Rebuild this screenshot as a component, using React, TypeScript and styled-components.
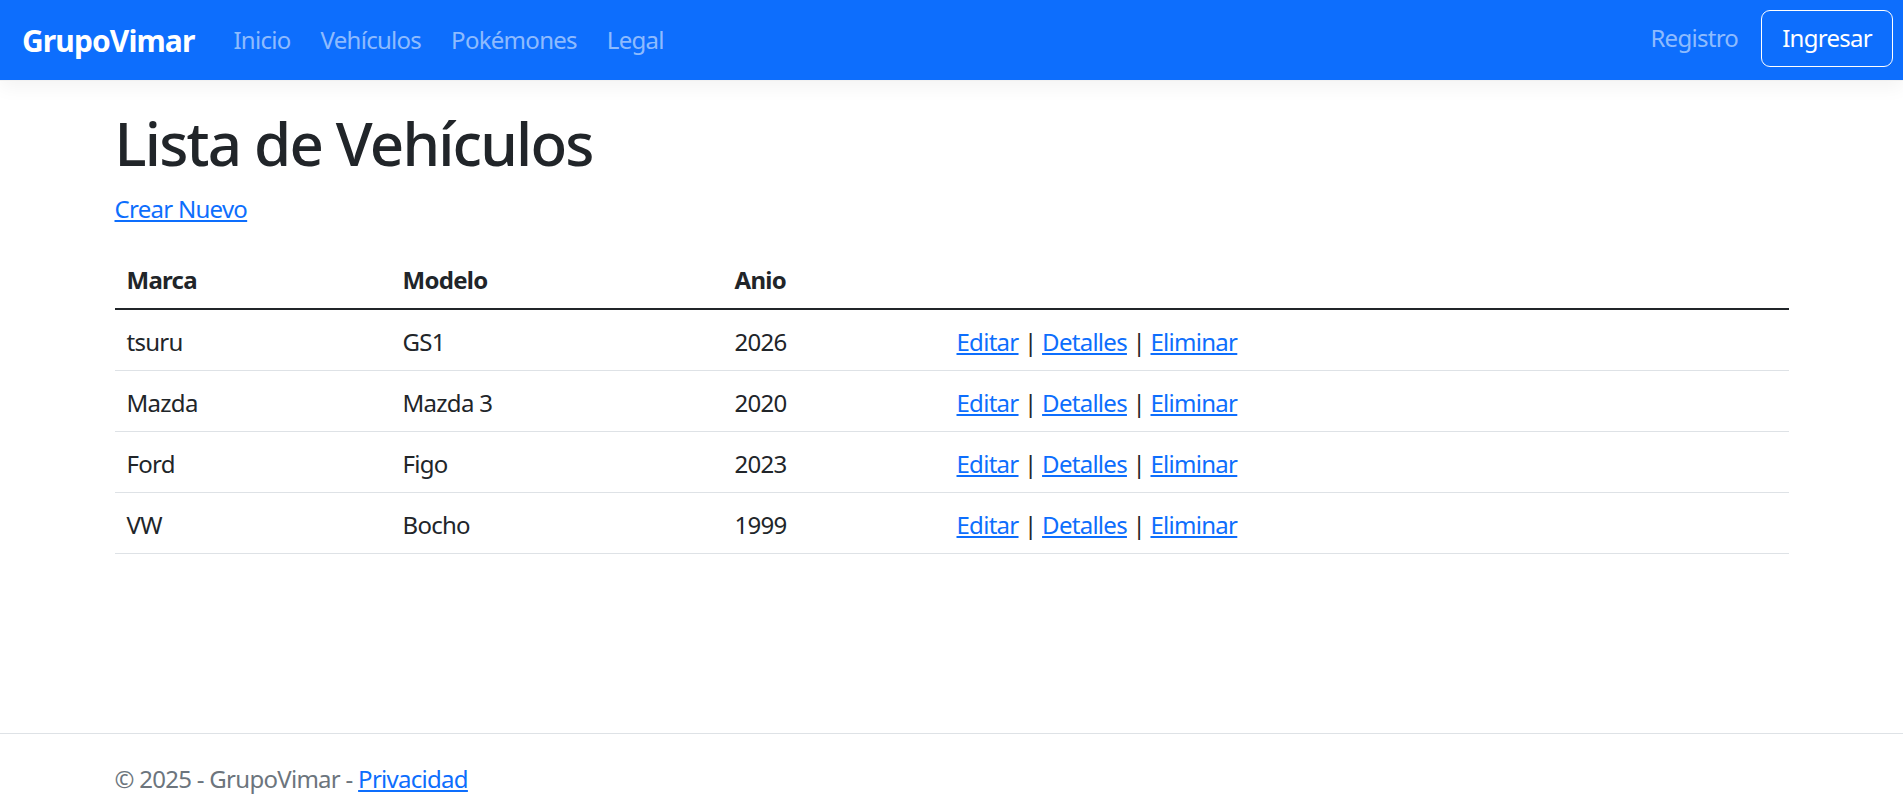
import React from 'react';
import styled, { createGlobalStyle } from 'styled-components';

const GlobalStyle = createGlobalStyle`
  html, body {
    margin: 0;
    padding: 0;
  }
  body {
    font-family: 'Noto Sans', 'Open Sans', sans-serif;
    font-size: 24px;
    line-height: 1.5;
    color: #212529;
    background: #fff;
  }
  * {
    box-sizing: border-box;
  }
`;

const Page = styled.div`
  display: flex;
  flex-direction: column;
  min-height: 824px;
`;

const Navbar = styled.nav`
  height: 81px;
  display: flex;
  align-items: center;
  padding: 0 10px 0 22px;
  background: #0d6efd;
  box-shadow: 0 6px 18px rgba(0, 0, 0, 0.05);
  border-bottom: 1px solid #f1f1f1;
`;

const Brand = styled.a`
  font-size: 30px;
  font-weight: 700;
  color: #fff;
  text-decoration: none;
  margin-right: 24px;
  letter-spacing: -0.03em;
`;

const NavList = styled.div`
  display: flex;
  align-items: center;
  flex: 1;
`;

const NavLink = styled.a`
  color: rgba(255, 255, 255, 0.55);
  text-decoration: none;
  padding: 0 15px;
  letter-spacing: -0.03em;
`;

const NavRight = styled.div`
  display: flex;
  align-items: center;
  gap: 8px;
  margin-top: -4px;
`;

const LoginButton = styled.button`
  font: inherit;
  letter-spacing: -0.03em;
  color: #fff;
  background: transparent;
  border: 1.5px solid #fff;
  border-radius: 9px;
  height: 57px;
  padding: 0 20px;
  cursor: pointer;
`;

const Main = styled.main`
  flex: 1;
  width: 1710px;
  max-width: 100%;
  margin: 26px auto 0;
  padding: 0 18px 24px;
`;

const Title = styled.h1`
  font-size: 60px;
  font-weight: 500;
  line-height: 1.2;
  margin: 0 0 12px;
  letter-spacing: -0.03em;
`;

const Link = styled.a`
  color: #0d6efd;
  text-decoration: underline;
  letter-spacing: -0.03em;
`;

const LinkLine = styled.p`
  margin: 0 0 21px;
`;

const Table = styled.table`
  width: 100%;
  border-collapse: collapse;
  margin-bottom: 24px;
  letter-spacing: -0.03em;
`;

const Th = styled.th<{ $w?: number }>`
  text-align: left;
  font-weight: 700;
  padding: 14px 12px 10px;
  width: ${(p) => (p.$w ? `${p.$w}px` : 'auto')};
  border-bottom: 2px solid #212529;
`;

const Td = styled.td`
  padding: 14px 12px 10px;
  border-bottom: 1px solid #dee2e6;
`;

const Footer = styled.footer`
  border-top: 1px solid #dee2e6;
  line-height: 90px;
  color: #6c757d;
  white-space: nowrap;
`;

const FooterInner = styled.div`
  width: 1710px;
  max-width: 100%;
  margin: 0 auto;
  padding: 0 18px;
  letter-spacing: -0.03em;
`;

const vehicles = [
  { marca: 'tsuru', modelo: 'GS1', anio: 2026 },
  { marca: 'Mazda', modelo: 'Mazda 3', anio: 2020 },
  { marca: 'Ford', modelo: 'Figo', anio: 2023 },
  { marca: 'VW', modelo: 'Bocho', anio: 1999 },
];

export default function App() {
  return (
    <Page>
      <GlobalStyle />
      <Navbar>
        <Brand href="#">GrupoVimar</Brand>
        <NavList>
          <NavLink href="#">Inicio</NavLink>
          <NavLink href="#">Vehículos</NavLink>
          <NavLink href="#">Pokémones</NavLink>
          <NavLink href="#">Legal</NavLink>
        </NavList>
        <NavRight>
          <NavLink href="#">Registro</NavLink>
          <LoginButton>Ingresar</LoginButton>
        </NavRight>
      </Navbar>
      <Main>
        <Title>Lista de Vehículos</Title>
        <LinkLine>
          <Link href="#">Crear Nuevo</Link>
        </LinkLine>
        <Table>
          <thead>
            <tr>
              <Th $w={276}>Marca</Th>
              <Th $w={332}>Modelo</Th>
              <Th $w={222}>Anio</Th>
              <Th></Th>
            </tr>
          </thead>
          <tbody>
            {vehicles.map((v) => (
              <tr key={v.marca}>
                <Td>{v.marca}</Td>
                <Td>{v.modelo}</Td>
                <Td>{v.anio}</Td>
                <Td>
                  <Link href="#">Editar</Link> | <Link href="#">Detalles</Link> |{' '}
                  <Link href="#">Eliminar</Link>
                </Td>
              </tr>
            ))}
          </tbody>
        </Table>
      </Main>
      <Footer>
        <FooterInner>
          © 2025 - GrupoVimar - <Link href="#">Privacidad</Link>
        </FooterInner>
      </Footer>
    </Page>
  );
}
